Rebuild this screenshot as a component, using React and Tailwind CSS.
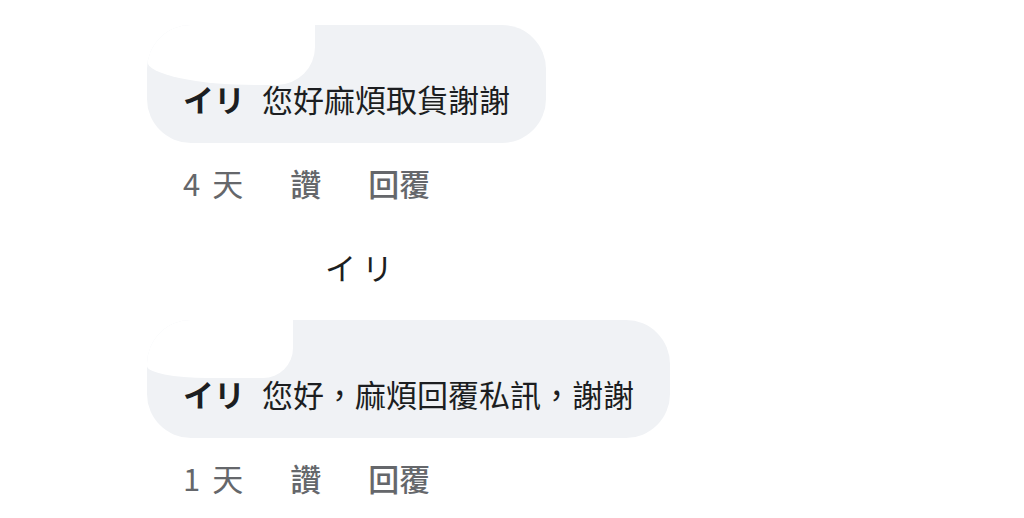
import React from 'react';

const font = { fontFamily: '"Noto Sans CJK TC", "Noto Sans CJK SC", "Noto Sans", sans-serif' };

function Bubble({ name, text, blobClass, className }) {
  return (
    <div className={`relative flex items-end self-start h-[118px] rounded-[44px] bg-[#f0f2f5] pl-9 pr-9 pb-[26px] overflow-hidden ${className}`}>
      {/* white cut-out at top-left */}
      <div className={blobClass} />
      <p className="relative flex text-[31px] leading-[36px] text-[#1c1e21] whitespace-nowrap">
        <span className="font-bold">{name}</span>
        <span className="ml-[17px]">{text}</span>
      </p>
    </div>
  );
}

function Meta({ num, className }) {
  return (
    <div className={`flex items-center gap-[47px] pl-9 text-[31px] leading-[36px] text-[#65676b] ${className}`}>
      <span className="flex">
        <span>{num}</span>
        <span className="ml-[12px]">天</span>
      </span>
      <span className="font-medium">讚</span>
      <span className="font-medium">回覆</span>
    </div>
  );
}

export default function App() {
  return (
    <div className="w-[1024px] h-[518px] bg-white overflow-hidden" style={font}>
      <div className="flex flex-col pl-[147px] pt-[25px]">
        <Bubble
          name="イリ"
          text="您好麻煩取貨謝謝"
          blobClass="absolute left-0 top-0 w-[168px] h-[60px] bg-white rounded-br-[38px] rounded-bl-[110px_24px]"
        />
        <Meta num="4" className="mt-[22px]" />
        <div className="mt-[48px] ml-[178px] text-[31px] leading-[36px] text-[#1c1e21] tracking-[6px]">イリ</div>
        <Bubble
          name="イリ"
          text="您好，麻煩回覆私訊，謝謝"
          className="mt-[35px]"
          blobClass="absolute left-0 top-0 w-[146px] h-[58px] bg-white rounded-br-[30px] rounded-bl-[60px_12px]"
        />
        <Meta num="1" className="mt-[22px]" />
      </div>
    </div>
  );
}
